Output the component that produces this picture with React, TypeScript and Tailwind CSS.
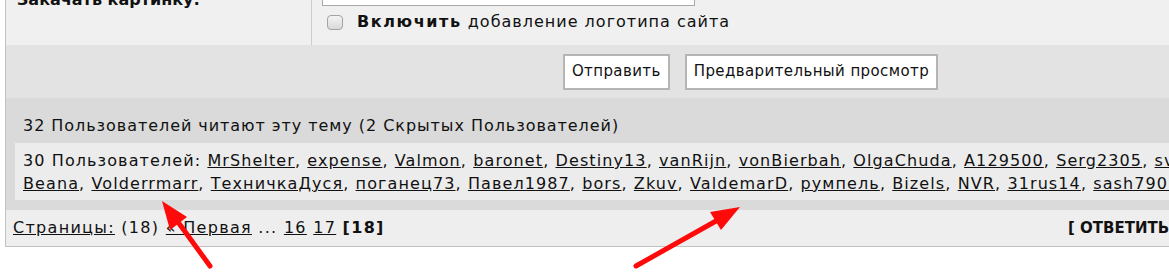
import React from "react";

const firstLine = [
  "MrShelter",
  "expense",
  "Valmon",
  "baronet",
  "Destiny13",
  "vanRijn",
  "vonBierbah",
  "OlgaChuda",
  "A129500",
  "Serg2305",
  "sveta_m",
];

const secondLine = [
  "Beana",
  "Volderrmarr",
  "ТехничкаДуся",
  "поганец73",
  "Павел1987",
  "bors",
  "Zkuv",
  "ValdemarD",
  "румпель",
  "Bizels",
  "NVR",
  "31rus14",
  "sash7901",
  "Kirill_K",
];

function Names({ names, last }: { names: string[]; last?: boolean }) {
  return (
    <>
      {names.map((n, i) => (
        <React.Fragment key={n}>
          <a href="#" className="underline">
            {n}
          </a>
          {i < names.length - 1 || !last ? ", " : ""}
        </React.Fragment>
      ))}
    </>
  );
}

function Arrows() {
  return (
    <svg className="pointer-events-none absolute left-0 top-0" width="1169" height="278" viewBox="0 0 1169 278">
      <g stroke="#ff0a0a" strokeWidth="5" strokeLinecap="round" fill="none">
        <line x1="210" y1="266" x2="178" y2="222" />
        <line x1="636" y1="266" x2="716" y2="221" />
      </g>
      <g fill="#ff0a0a">
        <polygon points="162,201 187,217 170,230" />
        <polygon points="740,207 721,230 710,212" />
      </g>
    </svg>
  );
}

export default function App() {
  return (
    <div className="relative h-[278px] w-[1169px] overflow-hidden bg-white font-['DejaVu_Sans',sans-serif] text-[#111]">
      <div className="ml-[5px] w-[1490px] border-b border-l border-[#c2c2c2]">
        {/* upload row, mostly scrolled off */}
        <div className="flex h-[45px] bg-[#f0f0f0]">
          <div className="w-[306px] border-r border-[#cdcdcd] pl-[11px]">
            <div className="-mt-[10px] text-[16px] font-bold leading-[20px]">Закачать картинку:</div>
          </div>
          <div className="flex flex-col pl-[10px]">
            <div className="-mt-[24px] h-[30px] w-[373px] border border-[#a9a9a9] bg-white" />
            <label className="mt-[6px] flex items-center text-[16px] leading-[20px] tracking-[1px]">
              <span className="ml-[5px] mr-[14px] h-[15px] w-[16px] rounded-[4px] border border-[#a3a3a3] bg-gradient-to-b from-[#f4f4f4] to-[#d9d9d9]" />
              <span>
                <b className="tracking-[1.6px]">Включить</b> добавление логотипа сайта
              </span>
            </label>
          </div>
        </div>

        {/* buttons */}
        <div className="flex h-[53px] items-center justify-center gap-[15px] bg-[#e3e3e3] text-[15px] tracking-[0.4px]">
          <button className="h-[36px] border-2 border-[#b5b5b5] bg-white px-[7px]">Отправить</button>
          <button className="h-[36px] border-2 border-[#b5b5b5] bg-white px-[7px]">Предварительный просмотр</button>
        </div>

        {/* who reads */}
        <div className="bg-[#dadada] pb-[10px] pl-[9px] pr-[9px] pt-[16px] text-[16px]">
          <div className="pl-[8px] leading-[24px] tracking-[0.95px]">
            32 Пользователей читают эту тему (2 Скрытых Пользователей)
          </div>
          <div className="mt-[5px] whitespace-nowrap bg-[#ececec] pb-[5px] pl-[8px] pt-[6px] leading-[23px] tracking-[1.1px]">
            <div>
              30 Пользователей: <Names names={firstLine} />
            </div>
            <div>
              <Names names={secondLine} last />
            </div>
          </div>
        </div>

        {/* pages */}
        <div className="flex h-[36px] items-center bg-[#eeeeee] pl-[7px] pr-[7px] text-[16px]">
          <div className="tracking-[1.3px]">
            <a href="#" className="underline">
              Страницы:
            </a>{" "}
            (18){" "}
            <a href="#" className="underline">
              « Первая
            </a>{" "}
            ...{" "}
            <a href="#" className="underline">
              16
            </a>{" "}
            <a href="#" className="underline">
              17
            </a>{" "}
            <b>[18]</b>
          </div>
          <div className="ml-auto w-[420px] whitespace-nowrap text-[15px] font-bold">
            [ ОТВЕТИТЬ ] &nbsp; [ НОВАЯ ТЕМА ]
          </div>
        </div>
      </div>
      <Arrows />
    </div>
  );
}
